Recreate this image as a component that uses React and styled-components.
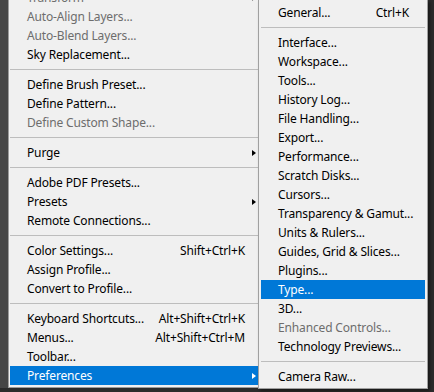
import React from "react";
import styled, { createGlobalStyle } from "styled-components";

const GlobalStyle = createGlobalStyle`
  html, body { margin: 0; padding: 0; background: #2b2b2b; overflow: hidden; }
  * { box-sizing: border-box; }
`;

const Screen = styled.div`
  width: 434px;
  height: 392px;
  display: flex;
  align-items: flex-start;
  overflow: hidden;
  background: #2b2b2b;
  font-family: "Noto Sans", "Noto Sans CJK KR", sans-serif;
  font-size: 12px;
  letter-spacing: -0.15px;
`;

const Gutter = styled.div`
  width: 8px;
  height: 388px;
  flex: none;
  background: #464646;
`;

const Menu = styled.div`
  flex: none;
  background: #f0f0f0;
  display: flex;
  flex-direction: column;
`;

const MainMenu = styled(Menu)`
  width: 250px;
  margin-top: -14px;
  padding: 2px 0 2px 1px;
  border-left: 1px solid #9b9b9b;
  border-bottom: 1px solid #9b9b9b;
`;

const SubMenu = styled(Menu)`
  width: 170px;
  padding: 2px;
  border: 1px solid #a0a0a0;
  border-top: none;
  padding-top: 3px;
  box-shadow: 2px 2px 3px rgba(0, 0, 0, 0.45);
  position: relative;
`;

const Row = styled.div`
  height: 19px;
  display: grid;
  grid-template-columns: 1fr auto ${(p) => p.$trail}px;
  align-items: center;
  padding-left: 17px;
  line-height: 19px;
  white-space: nowrap;
  color: ${(p) => (p.$active ? "#ffffff" : p.$disabled ? "#6d6d6d" : "#000000")};
  background: ${(p) => (p.$active ? "#0078d7" : "transparent")};
`;

const Label = styled.span``;

const Shortcut = styled.span`
  text-align: right;
`;

const ArrowCell = styled.span`
  display: flex;
  align-items: center;
  justify-content: flex-start;
  padding-left: 7px;
`;

const Arrow = styled.span`
  width: 0;
  height: 0;
  border-top: 3.5px solid transparent;
  border-bottom: 3.5px solid transparent;
  border-left: 4px solid ${(p) => (p.$active ? "#ffffff" : p.$disabled ? "#6d6d6d" : "#000000")};
`;

const Separator = styled.div`
  height: 11px;
  padding-top: 5px;
  &::before {
    content: "";
    display: block;
    height: 1px;
    background: #bdbdbd;
  }
`;

const mainItems = [
  { label: "Transform", disabled: true, sub: true },
  { label: "Auto-Align Layers...", disabled: true },
  { label: "Auto-Blend Layers...", disabled: true },
  { label: "Sky Replacement..." },
  "sep",
  { label: "Define Brush Preset..." },
  { label: "Define Pattern..." },
  { label: "Define Custom Shape...", disabled: true },
  "sep",
  { label: "Purge", sub: true },
  "sep",
  { label: "Adobe PDF Presets..." },
  { label: "Presets", sub: true },
  { label: "Remote Connections..." },
  "sep",
  { label: "Color Settings...", key: "Shift+Ctrl+K" },
  { label: "Assign Profile..." },
  { label: "Convert to Profile..." },
  "sep",
  { label: "Keyboard Shortcuts...", key: "Alt+Shift+Ctrl+K" },
  { label: "Menus...", key: "Alt+Shift+Ctrl+M" },
  { label: "Toolbar..." },
  { label: "Preferences", sub: true, active: true },
];

const subItems = [
  { label: "General...", key: "Ctrl+K" },
  "sep",
  { label: "Interface..." },
  { label: "Workspace..." },
  { label: "Tools..." },
  { label: "History Log..." },
  { label: "File Handling..." },
  { label: "Export..." },
  { label: "Performance..." },
  { label: "Scratch Disks..." },
  { label: "Cursors..." },
  { label: "Transparency & Gamut..." },
  { label: "Units & Rulers..." },
  { label: "Guides, Grid & Slices..." },
  { label: "Plugins..." },
  { label: "Type...", active: true },
  { label: "3D..." },
  { label: "Enhanced Controls...", disabled: true },
  { label: "Technology Previews..." },
  "sep",
  { label: "Camera Raw..." },
];

function Items({ items, trail }) {
  return items.map((it, i) =>
    it === "sep" ? (
      <Separator key={i} />
    ) : (
      <Row key={i} $trail={trail} $active={it.active} $disabled={it.disabled}>
        <Label>{it.label}</Label>
        <Shortcut>{it.key || ""}</Shortcut>
        <ArrowCell>
          {it.sub && <Arrow $active={it.active} $disabled={it.disabled} />}
        </ArrowCell>
      </Row>
    )
  );
}

export default function App() {
  return (
    <>
      <GlobalStyle />
      <Screen>
        <Gutter />
        <MainMenu>
          <Items items={mainItems} trail={13} />
        </MainMenu>
        <SubMenu>
          <Items items={subItems} trail={16} />
        </SubMenu>
      </Screen>
    </>
  );
}
